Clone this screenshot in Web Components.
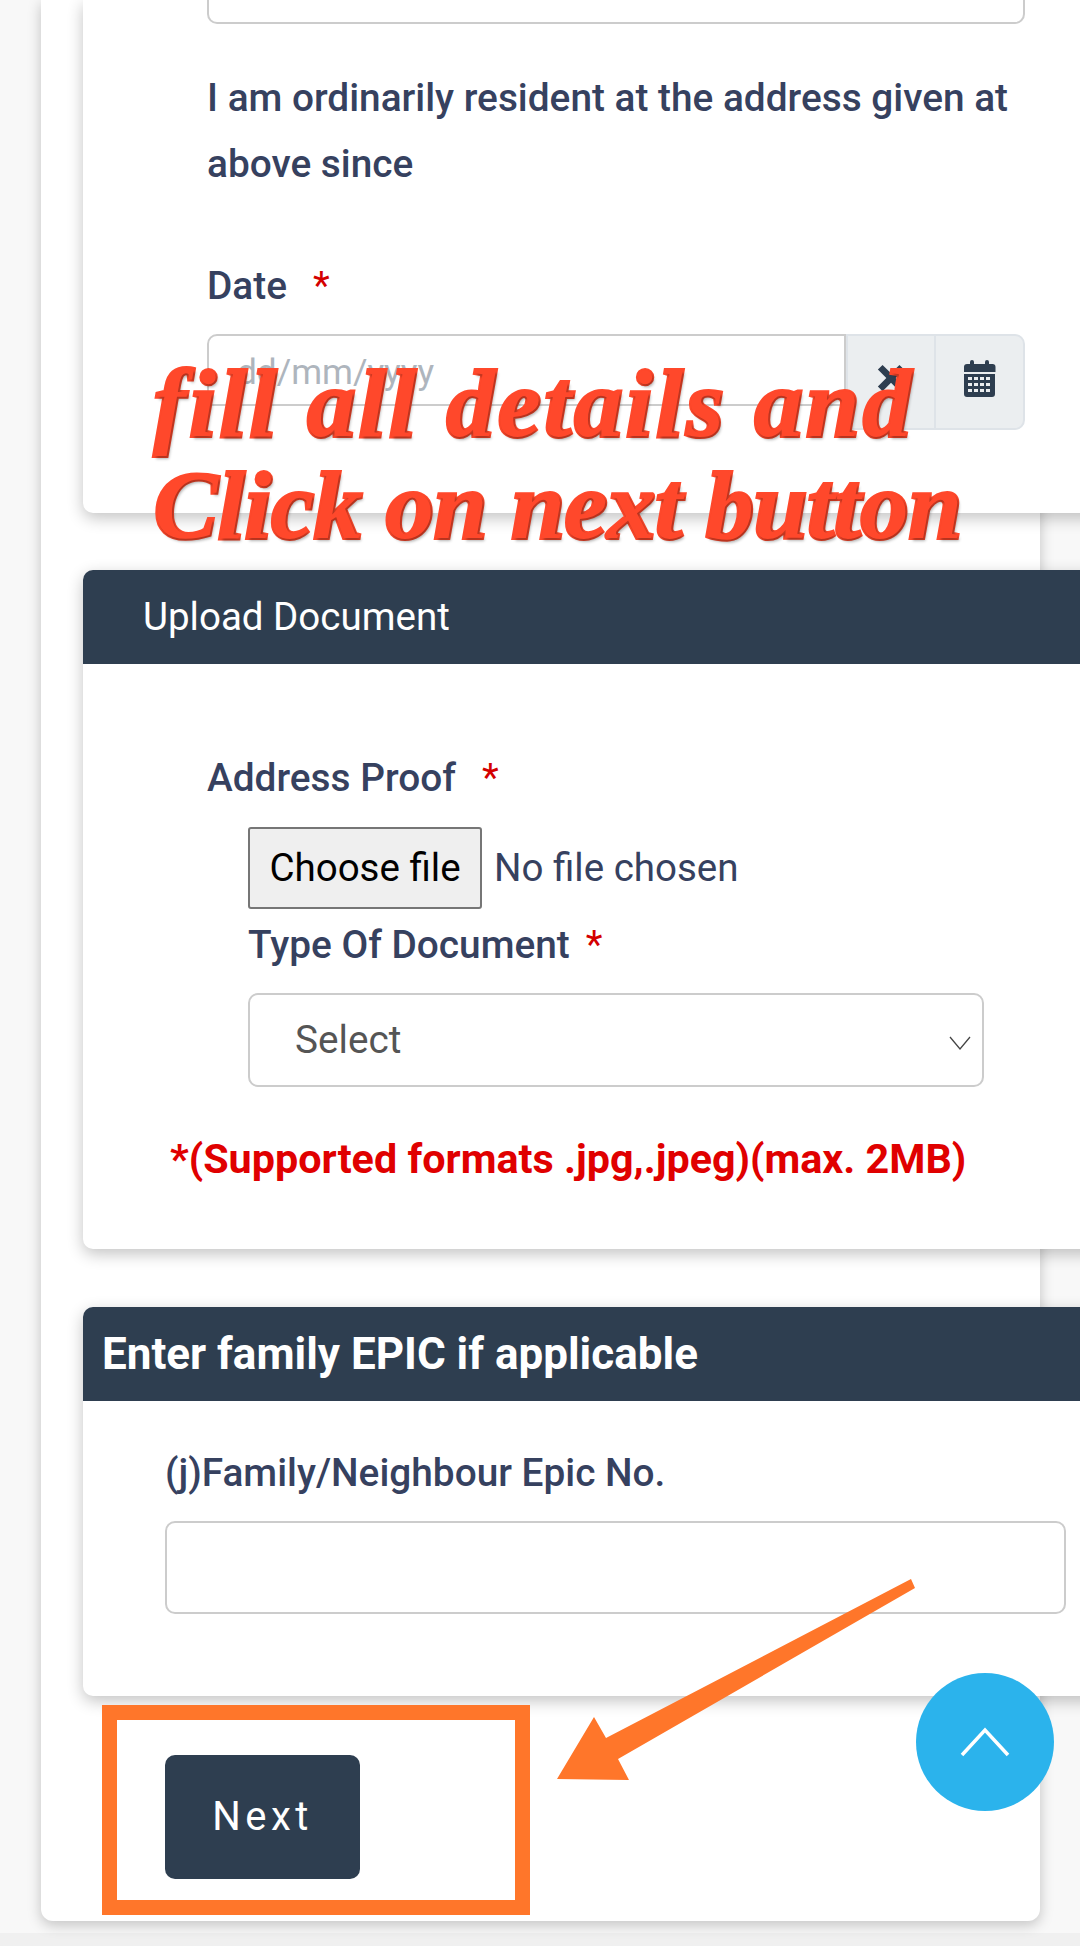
<!DOCTYPE html>
<html><head><meta charset="utf-8"><style>
html,body{margin:0;padding:0;width:1080px;height:1946px;overflow:hidden;background:#f8f8f8;font-family:Roboto,"Liberation Sans",sans-serif;color:#36415f}
</style></head><body>
<x-page>
  <x-card>
    <x-box style="--w:818px;--h:24px;--ml:124px;--r:0 0 10px 10px;--bt:0"></x-box>
    <x-label style="--ml:124px;--mt:41px;--lh:66px;--w:830px">I am ordinarily resident at the address given at above since</x-label>
    <x-label star style="--ml:124px;--mt:67px;--lh:44px;--gap:26px">Date</x-label>
    <x-date></x-date>
  </x-card>
  <x-card head="Upload Document" style="--mt:57px">
    <x-label star style="--ml:124px;--mt:92px;--lh:44px;--gap:26px">Address Proof</x-label>
    <x-file></x-file>
    <x-label star style="--ml:165px;--mt:14px;--lh:44px;--gap:16px">Type Of Document</x-label>
    <x-select></x-select>
    <x-note>*(Supported formats .jpg,.jpeg)(max. 2MB)</x-note>
  </x-card>
  <x-card head="Enter family EPIC if applicable" bold style="--mt:58px">
    <x-label style="--ml:82px;--mt:50px;--lh:44px">(j)Family/Neighbour Epic No.</x-label>
    <x-box style="--w:901px;--h:93px;--ml:82px;--mt:26px;--mb:82px;--r:10px"></x-box>
  </x-card>
  <x-next>Next</x-next>
  <x-annot></x-annot>
</x-page>
<script>
function def(name,html){customElements.define(name,class extends HTMLElement{
  connectedCallback(){if(this.shadowRoot)return;const r=this.attachShadow({mode:'open'});r.innerHTML=typeof html==='function'?html(this):html;}
});}
def('x-page',`<style>:host{display:block;width:1080px;height:1946px;position:relative;overflow:hidden;background:#f8f8f8}
.strip{position:absolute;left:0;right:0;bottom:0;height:13px;background:#f0f0f0}
.outer{margin-left:41px;width:999px;height:1921px;background:#fff;border-radius:0 0 12px 12px;box-shadow:0 4px 14px rgba(0,0,0,.22);position:relative;display:flow-root}
</style><div class="strip"></div><div class="outer"><slot></slot></div>`);
def('x-card',h=>{const head=h.getAttribute('head');const bold=h.hasAttribute('bold');
 return `<style>:host{display:block;margin-left:42px;width:1040px;margin-top:var(--mt,0);background:#fff;border-radius:10px;box-shadow:0 5px 16px rgba(0,0,0,.24);position:relative}
 :host(:first-child){border-radius:0 0 0 10px}
 .h{height:94px;background:#2e3e50;border-radius:10px 0 0 0;color:#fff;display:flex;align-items:center;box-sizing:border-box;font:400 38.5px/1 Roboto,sans-serif;padding-left:60px}
 .h.b{font-weight:700;font-size:44px;padding-left:19px}
 .c{display:flow-root}
 </style>${head?`<div class="h ${bold?'b':''}">${head}</div>`:''}<div class="c"><slot></slot></div>`});
def('x-box',`<style>:host{display:block;box-sizing:border-box;width:var(--w);height:var(--h);margin-left:var(--ml);margin-top:var(--mt,0);margin-bottom:var(--mb,0);border:2px solid #ccc;border-top-width:var(--bt,2px);border-radius:var(--r);background:#fff}</style>`);
def('x-label',h=>{const s=h.hasAttribute('star');return `<style>:host{display:block;margin-left:var(--ml);margin-top:var(--mt,0);width:var(--w,auto);font:500 38.8px/var(--lh) Roboto,sans-serif;color:#36415f}
 .s{color:#d40000;font-weight:400;margin-left:var(--gap,20px)}</style><slot></slot>${s?'<span class="s">*</span>':''}`});
def('x-date',`<style>:host{display:flex;margin:26px 0 83px 124px;width:818px;height:96px;font-family:Roboto,sans-serif}
 .i{flex:1;box-sizing:border-box;border:2px solid #ccc;border-radius:10px 0 0 0;padding:10px 0 0 28px;font-size:35.2px;line-height:52px;color:#aeb5bd;height:72px}
 .a{box-sizing:border-box;width:91px;height:96px;background:#ebeef0;border:2px solid #dee3e8;display:flex;justify-content:center}
 .a.x{width:88px;border-right:0;border-left:2px solid #dee3e8;border-radius:0}
 .a.c{border-radius:0 10px 10px 0}
 svg{display:block;margin-top:24px}
 </style><div class="i">dd/mm/yyyy</div>
 <div class="a x"><svg width="30" height="30" style="margin-top:27px" viewBox="0 0 32 32"><path d="M2 7 7 2l9 9 9-9 5 5-9 9 9 9-5 5-9-9-9 9-5-5 9-9z" fill="#2e3e50"/></svg></div>
 <div class="a c"><svg width="33" height="37" viewBox="0 0 33 37"><path fill="#2e3e50" fill-rule="evenodd" d="M5 4h2V2a2 2 0 0 1 4 0v2h11V2a2 2 0 0 1 4 0v2h3.500a3 3 0 0 1 3 3v5H1V7a3 3 0 0 1 3-3zM1 14h31v20a3 3 0 0 1-3 3H4a3 3 0 0 1-3-3z
 M5 17h4v3H5zM11 17h4v3h-4zM17 17h4v3h-4zM23 17h4v3h-4zM5 23h4v3H5zM11 23h4v3h-4zM17 23h4v3h-4zM23 23h4v3h-4zM5 29h4v3H5zM11 29h4v3h-4zM17 29h4v3h-4zM23 29h4v3h-4z"/></svg></div>`);
def('x-file',`<style>:host{display:flex;align-items:center;gap:12px;margin:27px 0 0 165px;font:400 38.5px/1 Roboto,sans-serif;color:#36415f}
 .b{box-sizing:border-box;width:234px;height:82px;background:#efefef;border:2px solid #767676;border-radius:3px;color:#000;display:flex;align-items:center;justify-content:center}</style>
 <div class="b">Choose file</div><span>No file chosen</span>`);
def('x-select',`<style>:host{display:flex;align-items:center;box-sizing:border-box;margin:26px 0 0 165px;width:736px;height:94px;border:2px solid #ccc;border-radius:10px;padding:0 11px 0 45px;font:400 38.7px/1 Roboto,sans-serif;color:#555}
 span{flex:1} svg{display:block;margin-top:6px}</style><span>Select</span><svg width="22" height="14" viewBox="0 0 22 14"><path d="M1 1l10 12L21 1" fill="none" stroke="#444" stroke-width="1.300"/></svg>`);
def('x-note',`<style>:host{display:block;margin:50px 0 0 87px;padding-bottom:68px;font:700 41.3px/44px Roboto,sans-serif;color:#e00000;white-space:nowrap}</style><slot></slot>`);
def('x-next',`<style>:host{display:flex;align-items:center;justify-content:center;box-sizing:border-box;margin:59px 0 0 124px;width:195px;height:124px;background:#2e3e50;border-radius:10px;color:#fff;font:400 40px/1 Roboto,sans-serif;letter-spacing:4.5px}</style><slot></slot>`);
def('x-annot',`<style>:host{display:block}
 .t{position:absolute;white-space:nowrap;font:italic 700 96px/1 "Liberation Serif",serif;color:#ff482b;-webkit-text-stroke:4px #ff482b;paint-order:stroke;text-shadow:2px 3px 3px rgba(0,0,0,.3)}
 .a{position:absolute;left:-41px;top:0;width:1080px;height:1946px;pointer-events:none}
 .up{position:absolute;left:875px;top:1673px;width:138px;height:138px;border-radius:50%;background:#2bb3ec;display:flex;align-items:center;justify-content:center}
 </style>
 <svg class="a" viewBox="0 0 1080 1946"><rect x="109.500" y="1712.500" width="413" height="195" fill="none" stroke="#ff762a" stroke-width="15"/>
 <path d="M911 1579 915 1588 618 1759 629 1780 557 1779 594 1717 606 1738z" fill="#ff762a"/></svg>
 <div class="up"><svg width="50" height="30" viewBox="0 0 50 30"><path d="M2 28 25 3l23 25" fill="none" stroke="#fff" stroke-width="3.500"/></svg></div>
 <div class="t" style="left:113px;top:356px;letter-spacing:3.500px">fill all details and</div>
 <div class="t" style="left:113px;top:458px;letter-spacing:0">Click on next button</div>`);
</script>
</body></html>
